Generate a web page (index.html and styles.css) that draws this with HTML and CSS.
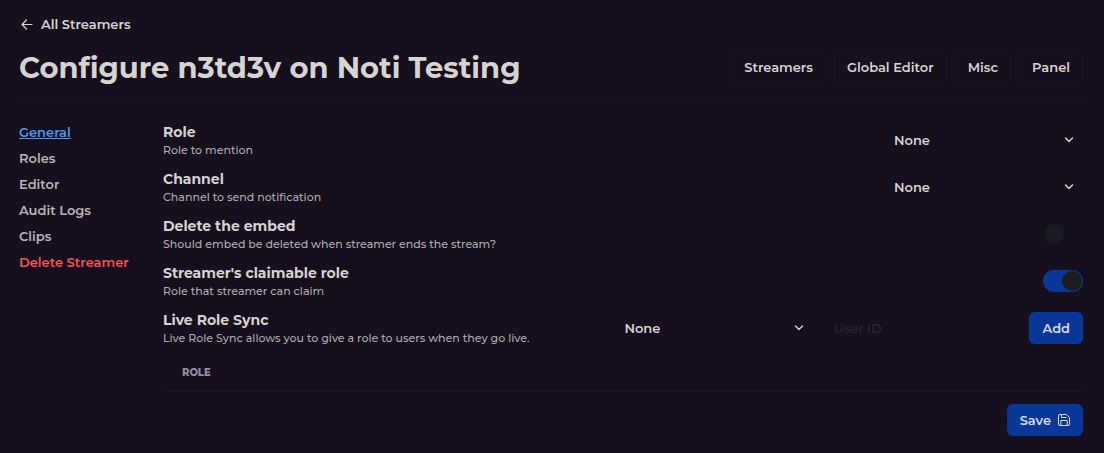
FILE: index.html
```html
<!DOCTYPE html>
<html lang="en">
<head>
<meta charset="utf-8">
<meta name="viewport" content="width=device-width, initial-scale=1">
<title>Configure n3td3v on Noti Testing</title>
<link rel="stylesheet" href="styles.css">
</head>
<body>
<div class="page">
  <header class="header">
    <a class="back" href="#streamers">
      <svg class="back-icon" viewBox="0 0 15 15" aria-hidden="true"><path d="M13 7.500H3.500M7.500 3 3 7.500 7.500 12"/></svg>
      All Streamers
    </a>
    <div class="title-bar">
      <h1 class="title">Configure n3td3v on Noti Testing</h1>
      <nav class="tabs" aria-label="Dashboard">
        <a class="tab" href="#streamers">Streamers</a>
        <a class="tab" href="#editor">Global Editor</a>
        <a class="tab" href="#misc">Misc</a>
        <a class="tab" href="#panel">Panel</a>
      </nav>
    </div>
  </header>
  <div class="content">
    <nav class="side" aria-label="Streamer">
      <a class="side-link active" href="#general">General</a>
      <a class="side-link" href="#roles">Roles</a>
      <a class="side-link" href="#embed">Editor</a>
      <a class="side-link" href="#logs">Audit Logs</a>
      <a class="side-link" href="#clips">Clips</a>
      <a class="side-link danger" href="#delete">Delete Streamer</a>
    </nav>
    <form class="settings">
      <div class="row">
        <div class="info"><label class="name" for="role">Role</label><p class="hint">Role to mention</p></div>
        <div class="select-box">
          <select class="select" id="role"><option>None</option></select>
          <svg class="chevron" viewBox="0 0 12 12" aria-hidden="true"><path d="M2.500 4 6 7.500 9.500 4"/></svg>
        </div>
      </div>
      <div class="row">
        <div class="info"><label class="name" for="channel">Channel</label><p class="hint">Channel to send notification</p></div>
        <div class="select-box">
          <select class="select" id="channel"><option>None</option></select>
          <svg class="chevron" viewBox="0 0 12 12" aria-hidden="true"><path d="M2.500 4 6 7.500 9.500 4"/></svg>
        </div>
      </div>
      <div class="row">
        <div class="info"><label class="name" for="embed-delete">Delete the embed</label><p class="hint">Should embed be deleted when streamer ends the stream?</p></div>
        <input class="switch" type="checkbox" role="switch" id="embed-delete">
      </div>
      <div class="row">
        <div class="info"><label class="name" for="claimable">Streamer's claimable role</label><p class="hint">Role that streamer can claim</p></div>
        <input class="switch" type="checkbox" role="switch" id="claimable" checked>
      </div>
      <div class="row">
        <div class="info"><label class="name" for="sync-role">Live Role Sync</label><p class="hint">Live Role Sync allows you to give a role to users when they go live.</p></div>
        <div class="controls">
          <div class="select-box">
            <select class="select" id="sync-role"><option>None</option></select>
            <svg class="chevron" viewBox="0 0 12 12" aria-hidden="true"><path d="M2.500 4 6 7.500 9.500 4"/></svg>
          </div>
          <input class="field" type="text" placeholder="User ID" aria-label="User ID">
          <button class="button" type="button">Add</button>
        </div>
      </div>
      <table class="table">
        <thead><tr><th scope="col">ROLE</th></tr></thead>
      </table>
      <div class="actions">
        <button class="button" type="submit">Save
          <svg class="save-icon" viewBox="0 0 12 12" aria-hidden="true"><path d="M2 .5h6.500l3 3V10A1.500 1.500 0 0 1 10 11.500H2A1.500 1.500 0 0 1 .5 10V2A1.500 1.500 0 0 1 2 .5ZM3.500 .5v3h4.500M2.800 11.500V6.500h6.400v5"/></svg>
        </button>
      </div>
    </form>
  </div>
</div>
</body>
</html>
```
FILE: styles.css
```css
* {
  box-sizing: border-box;
}

body {
  margin: 0;
  background: #150f1e;
  color: #d6d3d1;
  font-family: Montserrat, Inter, sans-serif;
  font-size: 13px;
  font-weight: 600;
  line-height: 20px;
}

a {
  color: inherit;
  text-decoration: none;
}

.page {
  padding: 14px 21px 16px 19px;
}

.header {
  display: flex;
  flex-direction: column;
  gap: 14px;
  padding-bottom: 13px;
  border-bottom: 1px solid #191522;
}

.back {
  display: flex;
  align-items: center;
  align-self: flex-start;
  gap: 7px;
}

.back-icon {
  width: 15px;
  height: 15px;
}

.back-icon,
.chevron,
.save-icon {
  fill: none;
  stroke: currentColor;
  stroke-width: 1.2;
  stroke-linecap: round;
  stroke-linejoin: round;
}

.title-bar {
  display: flex;
  align-items: center;
  justify-content: space-between;
}

.title {
  margin: 0;
  font-size: 29px;
  font-weight: 700;
  line-height: 40px;
}

.tabs {
  display: flex;
  gap: 8px;
}

.tab {
  padding: 4px 12px 6px;
  border: 1px solid #171321;
  border-radius: 6px;
}

.content {
  display: grid;
  grid-template-columns: 128px 1fr;
  gap: 16px;
  padding-top: 18px;
}

.side {
  display: flex;
  flex-direction: column;
  align-items: flex-start;
  gap: 6px;
  padding-top: 2px;
  color: #b8b5b5;
}

.active {
  color: #4f97f5;
  text-decoration: underline;
}

.danger {
  color: #f85252;
}

.settings {
  display: flex;
  flex-direction: column;
  gap: 8px;
}

.row {
  display: flex;
  align-items: center;
  justify-content: space-between;
  min-height: 39px;
}

.info {
  display: flex;
  flex-direction: column;
}

.name {
  font-size: 14px;
  font-weight: 700;
  line-height: 20px;
}

.hint {
  margin: 0;
  color: #aeabab;
  font-size: 11px;
  font-weight: 500;
  line-height: 16px;
}

.controls {
  display: flex;
  gap: 8px;
}

.select-box {
  display: grid;
  align-items: center;
  width: 201px;
}

.select,
.field {
  width: 100%;
  height: 32px;
  padding: 0 12px;
  border: 0;
  border-radius: 6px;
  background: transparent;
  color: inherit;
  font: inherit;
  appearance: none;
}

.select,
.chevron {
  grid-area: 1 / 1;
}

.chevron {
  justify-self: end;
  width: 12px;
  height: 12px;
  margin-right: 8px;
  stroke-width: 1.5;
  pointer-events: none;
}

.field {
  width: 200px;
  font-weight: 500;
}

.field::placeholder {
  color: #2a2531;
  opacity: 1;
}

.switch {
  display: flex;
  width: 40px;
  height: 22px;
  margin: 0;
  padding: 1px;
  border-radius: 11px;
  background: #15101f;
  appearance: none;
}

.switch::before {
  width: 20px;
  height: 20px;
  border-radius: 50%;
  background: #1a1b1e;
  content: "";
}

.switch:checked {
  justify-content: flex-end;
  background: #0a3899;
}

.button {
  display: flex;
  align-items: center;
  gap: 7px;
  height: 32px;
  padding: 0 13px;
  border: 0;
  border-radius: 6px;
  background: #0a3899;
  color: #d6d9e2;
  font: inherit;
}

.save-icon {
  width: 12px;
  height: 12px;
  stroke-width: 1;
}

.table {
  width: 100%;
  border-collapse: collapse;
}

.table th {
  height: 36px;
  padding: 0 19px;
  border-bottom: 1px solid #1b1725;
  color: #908c9f;
  font-size: 10px;
  font-weight: 800;
  line-height: 16px;
  text-align: left;
}

.actions {
  display: flex;
  justify-content: flex-end;
  padding-top: 4px;
}
```
